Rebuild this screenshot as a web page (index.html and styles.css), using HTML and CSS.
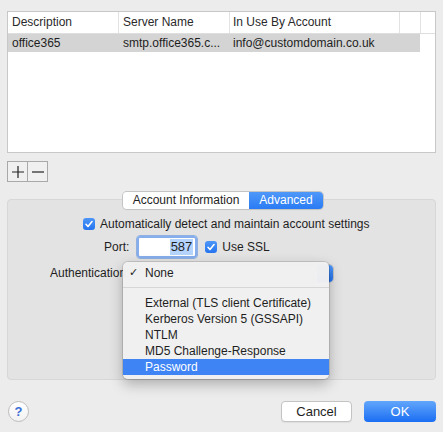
FILE: index.html
```html
<!DOCTYPE html>
<html>
<head>
<meta charset="utf-8">
<link rel="stylesheet" href="styles.css">
</head>
<body>
<div class="window">
  <div class="table">
    <div class="thead">
      <div class="th">Description</div>
      <div class="th">Server Name</div>
      <div class="th th-acc">In Use By Account</div>
      <div class="th"></div>
      <div class="th th-last"></div>
    </div>
    <div class="trow selected">
      <div class="td">office365</div>
      <div class="td">smtp.office365.c...</div>
      <div class="td td-acc">info@customdomain.co.uk</div>
    </div>
  </div>

  <div class="plusminus">
    <div class="pm-btn">
      <svg width="14" height="14" viewBox="0 0 14 14"><path d="M7 1v12M1 7h12" stroke="#222" stroke-width="1.2"/></svg>
    </div>
    <div class="pm-btn">
      <svg width="14" height="14" viewBox="0 0 14 14"><path d="M1 7h12" stroke="#222" stroke-width="1.2"/></svg>
    </div>
  </div>

  <div class="segmented">
    <div class="seg seg-off">Account Information</div>
    <div class="seg seg-on">Advanced</div>
  </div>

  <div class="group">
    <div class="row row-auto">
      <span class="check"><svg width="12" height="12" viewBox="0 0 12 12"><path d="M3 6.3l2 2.2 4-5" fill="none" stroke="#fff" stroke-width="1.6" stroke-linecap="round" stroke-linejoin="round"/></svg></span>
      <span class="row-label">Automatically detect and maintain account settings</span>
    </div>
    <div class="row row-port">
      <span class="port-label">Port:</span>
      <div class="port-field"><span class="port-sel">587</span></div>
      <span class="check"><svg width="12" height="12" viewBox="0 0 12 12"><path d="M3 6.3l2 2.2 4-5" fill="none" stroke="#fff" stroke-width="1.6" stroke-linecap="round" stroke-linejoin="round"/></svg></span>
      <span class="ssl-label">Use SSL</span>
    </div>
    <div class="row row-auth">
      <span class="auth-label">Authentication:</span>
      <div class="popup"><span class="popup-arrow"></span></div>
    </div>
  </div>

  <div class="footer">
    <div class="help">?</div>
    <div class="btn btn-cancel">Cancel</div>
    <div class="btn btn-ok">OK</div>
  </div>
</div>

<div class="menu">
  <div class="mi mi-none"><span class="tick">✓</span>None</div>
  <div class="msep"></div>
  <div class="mi">External (TLS client Certificate)</div>
  <div class="mi">Kerberos Version 5 (GSSAPI)</div>
  <div class="mi">NTLM</div>
  <div class="mi">MD5 Challenge-Response</div>
  <div class="mi mi-hl">Password</div>
</div>
</body>
</html>
```

FILE: styles.css
```css
* { box-sizing: border-box; }
html, body {
  margin: 0;
  padding: 0;
}
body {
  width: 443px;
  height: 432px;
  overflow: hidden;
  background: #ececec;
  font-family: "Liberation Sans", Arial, sans-serif;
  font-size: 12px;
  color: #1e1e1e;
  position: relative;
}
.window {
  padding: 11px 7px 0 7px;
}
.table {
  height: 142px;
  background: #fff;
  border: 1px solid #c8c8c8;
}
.thead, .trow {
  display: grid;
  grid-template-columns: 111px 111px 170px 21px 1fr;
}
.thead {
  height: 22px;
  border-bottom: 1px solid #dedede;
}
.th {
  border-right: 1px solid #e2e2e2;
  padding-left: 4px;
  line-height: 21px;
  color: #2a2a2a;
}
.th-acc { padding-left: 3px; }
.th-last { border-right: none; }
.trow {
  height: 18px;
  width: 412px;
  line-height: 18px;
}
.selected { background: #d4d4d4; }
.td { padding-left: 4px; white-space: nowrap; overflow: hidden; }
.td-acc { padding-left: 3px; grid-column: 3 / 5; }

.plusminus {
  display: flex;
  margin-top: 8px;
  width: 41px;
  height: 21px;
  border: 1px solid #a9a9a9;
  background: #f0f0f0;
}
.pm-btn {
  width: 20px;
  display: flex;
  align-items: center;
  justify-content: center;
}
.pm-btn + .pm-btn { border-left: 1px solid #a9a9a9; }

.segmented {
  display: flex;
  margin: 10px 0 -10px 116px;
  width: 200px;
  height: 17px;
  position: relative;
  z-index: 1;
  border-radius: 4px;
  box-shadow: 0 0 0 1px #c4c4c4, 0 1px 1px rgba(0,0,0,0.08);
  overflow: hidden;
  font-size: 12px;
}
.seg {
  line-height: 17px;
  text-align: center;
}
.seg-off {
  width: 126px;
  background: #fff;
  color: #1e1e1e;
}
.seg-on {
  width: 74px;
  background: linear-gradient(#4f98f9, #2a7bf4);
  color: #fff;
}

.group {
  height: 181px;
  background: #e3e3e3;
  border: 1px solid #d7d7d7;
  border-radius: 4px;
  padding-top: 17px;
}
.row {
  display: flex;
  align-items: center;
}
.check {
  width: 12px;
  height: 12px;
  border-radius: 3px;
  background: linear-gradient(#4d96f8, #2574ef);
  display: inline-flex;
  flex: none;
}
.row-auto {
  height: 14px;
  padding-left: 75px;
}
.row-label { margin-left: 5px; }
.row-port {
  margin-top: 4px;
  height: 24px;
  padding-left: 96px;
}
.port-field {
  margin-left: 7px;
  width: 62px;
  height: 24px;
  border-radius: 4px;
  background: #fff;
  border: 1px solid #8fb0e0;
  box-shadow: inset 0 0 0 2px #86adec;
  display: flex;
  align-items: center;
  justify-content: flex-end;
  padding-right: 4px;
}
.port-sel {
  background: #b4d4fd;
  line-height: 16px;
  padding: 0 1px;
  font-size: 13px;
}
.row-port .check { margin-left: 7px; }
.ssl-label { margin-left: 5px; }
.row-auth {
  margin-top: 6px;
  height: 16px;
  padding-left: 42px;
  padding-right: 102px;
}
.popup {
  margin-left: 4px;
  flex: 1;
  height: 17px;
  border-radius: 4px;
  background: #fff;
  box-shadow: 0 0 0 1px #c4c4c4;
  display: flex;
  justify-content: flex-end;
}
.popup-arrow {
  width: 16px;
  height: 17px;
  border-radius: 0 4px 4px 0;
  background: linear-gradient(#4f98f9, #2272ee);
}

.footer {
  display: flex;
  align-items: center;
  margin-top: 21px;
  height: 20px;
}
.help {
  margin-left: 1px;
  width: 21px;
  height: 21px;
  border-radius: 50%;
  background: linear-gradient(#ffffff, #f2f2f2);
  border: 1px solid #bdbdbd;
  color: #3b6fd6;
  font-size: 13px;
  font-weight: bold;
  text-align: center;
  line-height: 19px;
}
.btn {
  height: 21px;
  border-radius: 4px;
  text-align: center;
  line-height: 21px;
  font-size: 13px;
}
.btn-cancel {
  margin-left: auto;
  width: 71px;
  background: #fff;
  border: 1px solid #c3c3c3;
  line-height: 19px;
  box-shadow: 0 1px 1px rgba(0,0,0,0.06);
  color: #1e1e1e;
}
.btn-ok {
  margin-left: 12px;
  width: 72px;
  background: linear-gradient(#62a6fb, #1b6ef3);
  color: #fff;
}

.menu {
  position: absolute;
  left: 123px;
  top: 262px;
  width: 206px;
  height: 117px;
  background: rgba(240,240,240,0.98);
  border-radius: 5px;
  box-shadow: 0 0 0 1px rgba(0,0,0,0.12), 0 5px 14px rgba(0,0,0,0.28);
  padding-top: 3px;
  font-size: 12px;
  color: #1e1e1e;
  z-index: 5;
}
.mi {
  height: 16px;
  line-height: 16px;
  padding-left: 22px;
  white-space: nowrap;
}
.mi-none { position: relative; }
.tick {
  position: absolute;
  left: 6px;
  top: 0;
  font-family: "DejaVu Sans", sans-serif;
  font-size: 11px;
}
.msep {
  height: 14px;
  position: relative;
}
.msep::after {
  content: "";
  position: absolute;
  left: 0;
  right: 0;
  top: 6px;
  height: 1px;
  background: #d6d6d6;
}
.mi-hl {
  background: #3e84f5;
  color: #fff;
}
```
